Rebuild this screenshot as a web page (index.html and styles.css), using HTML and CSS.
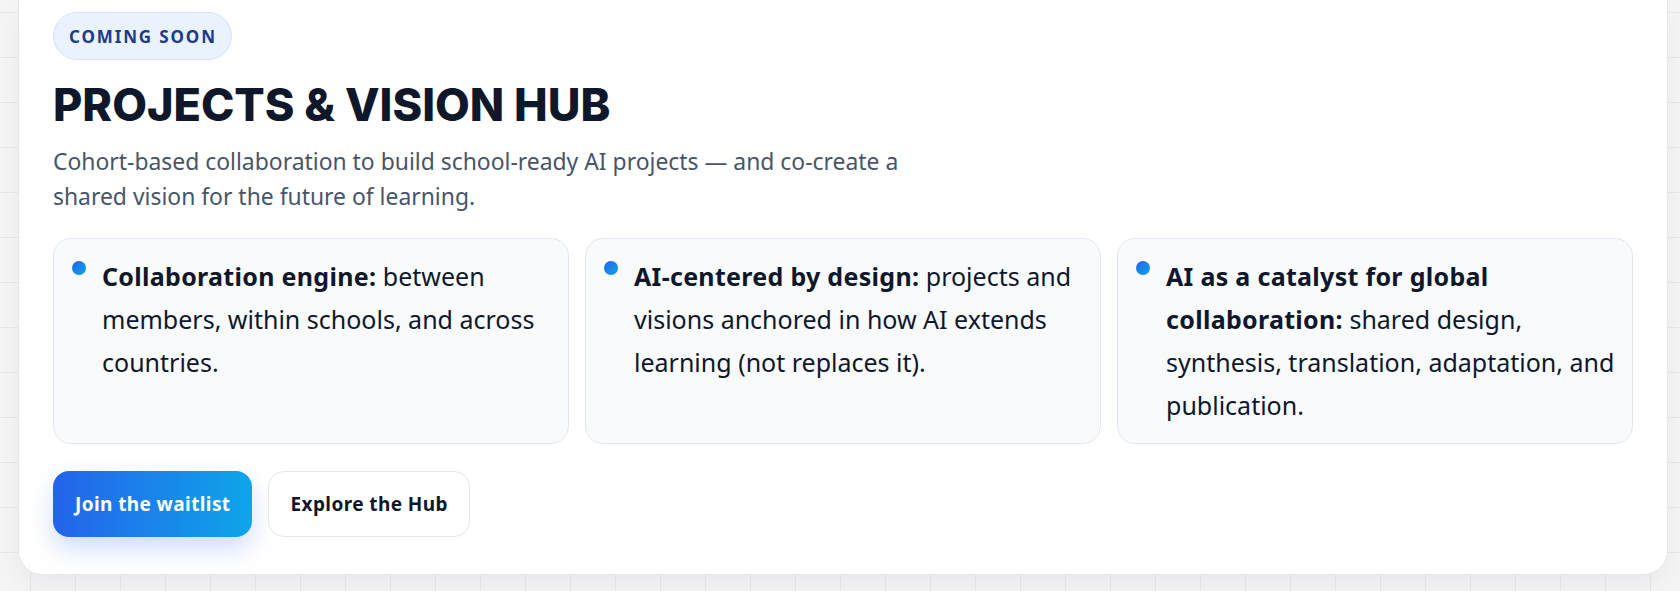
FILE: index.html
```html
<!DOCTYPE html>
<html lang="en">
<head>
<meta charset="utf-8">
<title>Projects &amp; Vision Hub</title>
<link rel="stylesheet" href="styles.css">
</head>
<body>
<div class="page">
  <section class="hub">
    <span class="badge">COMING SOON</span>
    <h1 class="title">PROJECTS &amp; VISION HUB</h1>
    <p class="lead">Cohort-based collaboration to build school-ready AI projects — and co-create a shared vision for the future of learning.</p>
    <div class="features">
      <div class="feature">
        <span class="dot"></span>
        <p><strong>Collaboration engine:</strong> between members, within schools, and across countries.</p>
      </div>
      <div class="feature">
        <span class="dot"></span>
        <p><strong>AI-centered by design:</strong> projects and visions anchored in how AI extends learning (not replaces it).</p>
      </div>
      <div class="feature">
        <span class="dot"></span>
        <p><strong>AI as a catalyst for global collaboration:</strong> shared design, synthesis, translation, adaptation, and publication.</p>
      </div>
    </div>
    <div class="actions">
      <a class="btn btn-primary" href="#">Join the waitlist</a>
      <a class="btn btn-secondary" href="#">Explore the Hub</a>
    </div>
  </section>
</div>
</body>
</html>
```
FILE: styles.css
```css
html, body {
  margin: 0;
  height: 100%;
}
body {
  background-color: #f5f5f6;
  background-image:
    linear-gradient(to right, #e7e8ea 1px, transparent 1px),
    linear-gradient(to bottom, #e7e8ea 1px, transparent 1px);
  background-size: 45px 45px;
  background-position: 30px 12px;
  font-family: "Noto Sans", "Open Sans", sans-serif;
  color: #0f172a;
}
.page {
  padding: 0 12px 0 18px;
}
.hub {
  width: 1650px;
  box-sizing: border-box;
  background: #fff;
  border: 1px solid #e5e7eb;
  border-top: 0;
  border-radius: 0 0 24px 24px;
  padding: 12px 34px 37px;
  box-shadow: 0 12px 30px rgba(15, 23, 42, 0.05);
}
.badge {
  display: flex;
  width: fit-content;
  align-items: center;
  height: 48px;
  box-sizing: border-box;
  padding: 0 14px 0 15px;
  border-radius: 999px;
  background: #eaf2fe;
  border: 1px solid #d3e3fb;
  color: #1e3a8a;
  font-weight: 700;
  font-size: 17px;
  letter-spacing: 0.11em;
}
.title {
  font-family: Inter, "Noto Sans", sans-serif;
  font-weight: 800;
  font-size: 45px;
  line-height: 52px;
  margin: 19px 0 0;
  color: #0f172a;
}
.lead {
  margin: 13px 0 0;
  max-width: 880px;
  font-size: 22.9px;
  line-height: 35px;
  color: #475569;
}
.features {
  display: grid;
  grid-template-columns: repeat(3, 1fr);
  gap: 16px;
  margin-top: 24px;
}
.feature {
  display: flex;
  gap: 16px;
  align-items: flex-start;
  background: #f8fafc;
  border: 1px solid #e2e8f0;
  border-radius: 18px;
  padding: 16px 10px 16px 18px;
}
.dot {
  flex: none;
  width: 14px;
  height: 14px;
  border-radius: 50%;
  background: linear-gradient(135deg, #2563eb, #0ea5e9);
  margin-top: 6px;
}
.feature p {
  margin: 0;
  font-size: 25px;
  line-height: 43px;
  color: #0f172a;
}
.feature strong {
  font-weight: 700;
  letter-spacing: 0.3px;
}
.actions {
  display: flex;
  gap: 16px;
  margin-top: 27px;
}
.btn {
  height: 66px;
  box-sizing: border-box;
  display: inline-flex;
  align-items: center;
  padding: 0 21px 0 22px;
  border-radius: 16px;
  font-weight: 700;
  font-size: 19px;
  letter-spacing: 0.4px;
  text-decoration: none;
}
.btn-primary {
  background: linear-gradient(90deg, #2563eb, #0ea5e9);
  color: #fff;
  box-shadow: 0 12px 24px rgba(37, 99, 235, 0.22);
}
.btn-secondary {
  background: #fff;
  border: 1px solid #e2e8f0;
  color: #0f172a;
}
```
